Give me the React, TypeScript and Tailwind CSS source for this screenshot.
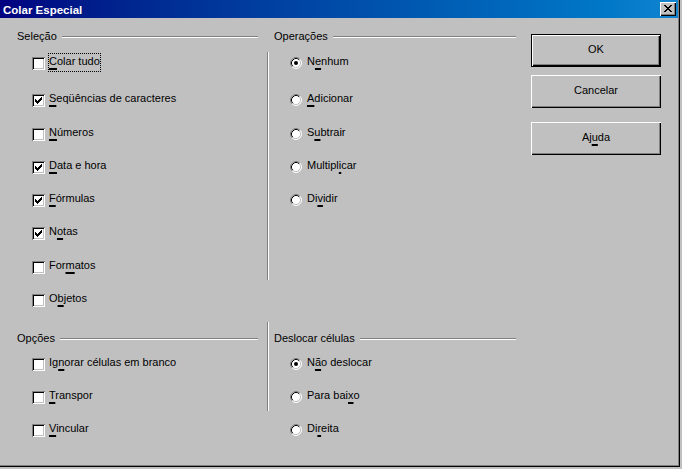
import React from "react";

type Row = { text: string; k: number; on?: boolean; mt: string; focus?: boolean };

const selecao: Row[] = [
  { text: "Colar tudo", k: 0, mt: "mt-[12px]", focus: true },
  { text: "Seqüências de caracteres", k: 0, on: true, mt: "mt-[24px]" },
  { text: "Números", k: 0, mt: "mt-[21px]" },
  { text: "Data e hora", k: 0, on: true, mt: "mt-[20px]" },
  { text: "Fórmulas", k: 0, on: true, mt: "mt-[20px]" },
  { text: "Notas", k: 1, on: true, mt: "mt-[20px]" },
  { text: "Formatos", k: 3, mt: "mt-[21px]" },
  { text: "Objetos", k: 1, mt: "mt-[20px]" },
];

const operacoes: Row[] = [
  { text: "Nenhum", k: 1, on: true, mt: "mt-[12px]" },
  { text: "Adicionar", k: 0, mt: "mt-[24px]" },
  { text: "Subtrair", k: 1, mt: "mt-[21px]" },
  { text: "Multiplicar", k: 7, mt: "mt-[20px]" },
  { text: "Dividir", k: 2, mt: "mt-[20px]" },
];

const opcoes: Row[] = [
  { text: "Ignorar células em branco", k: 2, mt: "mt-[11px]" },
  { text: "Transpor", k: 0, mt: "mt-[20px]" },
  { text: "Vincular", k: 0, mt: "mt-[20px]" },
];

const deslocar: Row[] = [
  { text: "Não deslocar", k: 1, on: true, mt: "mt-[11px]" },
  { text: "Para baixo", k: 8, mt: "mt-[20px]" },
  { text: "Direita", k: 2, mt: "mt-[20px]" },
];

// mnemonic letter underlined, like the accelerator keys in old windows dialogs
function Mn({ text, k }: { text: string; k: number }) {
  return (
    <>
      {text.slice(0, k)}
      <span className="underline decoration-2 underline-offset-[3px] [text-decoration-skip-ink:none]">
        {text[k]}
      </span>
      {text.slice(k + 1)}
    </>
  );
}

function Header({ title }: { title: string }) {
  return (
    <div className="flex h-[14px] items-center leading-[14px]">
      <span>{title}</span>
      <div className="ml-[5px] mt-[2px] h-[2px] flex-1 border-t border-b border-t-[#808080] border-b-white" />
    </div>
  );
}

const checkPixels = [
  [3, 5], [4, 6], [5, 7], [6, 6], [7, 5], [8, 4], [9, 3],
];

function CheckBox({ on }: { on?: boolean }) {
  return (
    <div className="relative mt-[2px] h-[13px] w-[13px] shrink-0 bg-white shadow-[inset_1px_1px_#808080,inset_-1px_-1px_#fff,inset_2px_2px_#000,inset_-2px_-2px_#c0c0c0]">
      {on && (
        <svg width="13" height="13" viewBox="0 0 13 13" shapeRendering="crispEdges" className="absolute left-0 top-0">
          {checkPixels.map(([x, y]) => (
            <rect key={x} x={x} y={y} width="1" height="3" fill="#000" />
          ))}
        </svg>
      )}
    </div>
  );
}

function Radio({ on }: { on?: boolean }) {
  return (
    <svg width="12" height="12" viewBox="0 0 12 12" className="mt-[2px] shrink-0">
      <circle cx="6" cy="6" r="5" fill="#fff" />
      <path d="M2.11 9.89 A5.5 5.5 0 0 1 9.89 2.11" fill="none" stroke="#808080" />
      <path d="M9.89 2.11 A5.5 5.5 0 0 1 2.11 9.89" fill="none" stroke="#fff" />
      <path d="M2.82 9.18 A4.5 4.5 0 0 1 9.18 2.82" fill="none" stroke="#000" />
      <path d="M9.18 2.82 A4.5 4.5 0 0 1 2.82 9.18" fill="none" stroke="#c0c0c0" />
      {on && <circle cx="6" cy="6" r="2" fill="#000" />}
    </svg>
  );
}

function CheckRow({ row }: { row: Row }) {
  return (
    <div className={`flex h-[13px] items-start pl-[15px] ${row.mt}`}>
      <CheckBox on={row.on} />
      <span className="relative ml-[4px] whitespace-nowrap leading-[13px]">
        <Mn text={row.text} k={row.k} />
        {row.focus && (
          <span className="absolute -bottom-[4px] -left-[1px] -right-[1px] -top-[2px] border border-dotted border-black" />
        )}
      </span>
    </div>
  );
}

function RadioRow({ row }: { row: Row }) {
  return (
    <div className={`flex h-[13px] items-start pl-[16px] ${row.mt}`}>
      <Radio on={row.on} />
      <span className="ml-[5px] whitespace-nowrap leading-[13px]">
        <Mn text={row.text} k={row.k} />
      </span>
    </div>
  );
}

function Button({ label, k, def, mt }: { label: string; k?: number; def?: boolean; mt: string }) {
  const face = (
    <div className="flex h-full w-full items-center justify-center pb-[3px] shadow-[inset_1px_1px_#fff,inset_-1px_-1px_#000,inset_-2px_-2px_#808080]">
      {k === undefined ? label : <Mn text={label} k={k} />}
    </div>
  );
  return (
    <div className={`h-[33px] w-[130px] ${mt} ${def ? "border border-black" : ""}`}>{face}</div>
  );
}

const xPixels = [
  "11....11",
  ".11..11.",
  "..1111..",
  "...11...",
  "..1111..",
  ".11..11.",
  "11....11",
];

export default function App() {
  return (
    <div className="h-[469px] w-[682px] overflow-hidden bg-[#c0c0c0] font-['Liberation_Sans',Arial,sans-serif] text-[11px] text-black">
      <div className="h-[467px] w-[680px] shadow-[inset_-1px_-1px_#000,inset_-2px_-2px_#808080]">
        {/* title bar */}
        <div className="flex h-[18px] w-[678px] items-center justify-between bg-gradient-to-r from-[#000080] to-[#1084d0] pl-[3px] pr-[2px]">
          <span className="pt-[1px] text-[11.5px] font-bold leading-[18px] text-white">Colar Especial</span>
          <div className="flex h-[14px] w-[16px] items-center justify-center bg-[#c0c0c0] shadow-[inset_1px_1px_#fff,inset_-1px_-1px_#000,inset_-2px_-2px_#808080]">
            <svg width="8" height="7" viewBox="0 0 8 7" shapeRendering="crispEdges" className="-mt-[1px]">
              {xPixels.map((line, y) =>
                line.split("").map((c, x) =>
                  c === "1" ? <rect key={`${x}-${y}`} x={x} y={y} width="1" height="1" fill="#000" /> : null
                )
              )}
            </svg>
          </div>
        </div>

        {/* body */}
        <div className="flex pl-[17px] pt-[11px]">
          <div className="w-[241px]">
            <div className="h-[302px]">
              <Header title="Seleção" />
              {selecao.map((r) => (
                <CheckRow key={r.text} row={r} />
              ))}
            </div>
            <Header title="Opções" />
            {opcoes.map((r) => (
              <CheckRow key={r.text} row={r} />
            ))}
          </div>

          <div className="flex w-[16px] flex-col">
            <div className="ml-[9px] mt-[23px] h-[228px] w-[2px] border-l border-r border-l-[#808080] border-r-white" />
            <div className="ml-[9px] mt-[42px] h-[89px] w-[2px] border-l border-r border-l-[#808080] border-r-white" />
          </div>

          <div className="w-[242px]">
            <div className="h-[302px]">
              <Header title="Operações" />
              {operacoes.map((r) => (
                <RadioRow key={r.text} row={r} />
              ))}
            </div>
            <Header title="Deslocar células" />
            {deslocar.map((r) => (
              <RadioRow key={r.text} row={r} />
            ))}
          </div>

          <div className="ml-[15px] flex w-[130px] flex-col">
            <Button label="OK" def mt="mt-[5px]" />
            <Button label="Cancelar" mt="mt-[8px]" />
            <Button label="Ajuda" k={2} mt="mt-[14px]" />
          </div>
        </div>
      </div>
    </div>
  );
}
